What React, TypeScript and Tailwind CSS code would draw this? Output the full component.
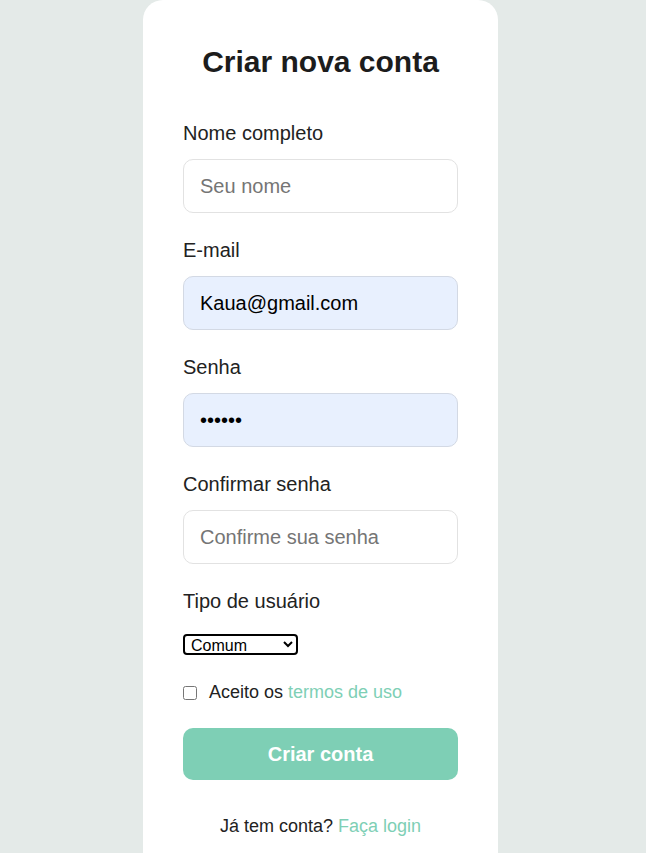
import { useState } from 'react';

const inputBase =
  'block w-full h-[54px] rounded-[10px] border px-4 text-[20px] text-black outline-none placeholder:text-[#757575]';

export default function App() {
  const [tipo, setTipo] = useState('comum');

  return (
    <div className="min-h-screen bg-[#e4eae8] font-['Liberation_Sans',Arial,sans-serif] flex justify-center pr-[5px]">
      <div className="w-[355px] bg-white rounded-[20px] px-10 pt-[44px] pb-[40px]">
        {/* Title */}
        <h1 className="text-center text-[30px] leading-[36px] font-bold text-[#1c1c1c] mb-[42px]">
          Criar nova conta
        </h1>

        {/* Fields */}
        <div className="mb-[26px]">
          <label className="block text-[20px] leading-[23px] text-[#222] mb-[14px]">Nome completo</label>
          <input className={`${inputBase} border-[#e2e2e2] bg-white`} placeholder="Seu nome" />
        </div>

        <div className="mb-[26px]">
          <label className="block text-[20px] leading-[23px] text-[#222] mb-[14px]">E-mail</label>
          <input className={`${inputBase} border-[#d3d9e4] bg-[#e8f0fe]`} defaultValue="Kaua@gmail.com" />
        </div>

        <div className="mb-[26px]">
          <label className="block text-[20px] leading-[23px] text-[#222] mb-[14px]">Senha</label>
          <input
            type="password"
            className={`${inputBase} border-[#d3d9e4] bg-[#e8f0fe]`}
            defaultValue="123456"
          />
        </div>

        <div className="mb-[26px]">
          <label className="block text-[20px] leading-[23px] text-[#222] mb-[14px]">Confirmar senha</label>
          <input type="password" className={`${inputBase} border-[#e2e2e2] bg-white`} placeholder="Confirme sua senha" />
        </div>

        <div>
          <label className="block text-[20px] leading-[23px] text-[#222] mb-[21px]">Tipo de usuário</label>
          <select
            value={tipo}
            onChange={(e) => setTipo(e.target.value)}
            className="block w-[115px] h-[21px] border-2 border-black rounded-[4px] text-[16px] leading-[17px] text-black bg-white pl-[2px]"
          >
            <option value="comum">Comum</option>
            <option value="admin">Administrador</option>
          </select>
        </div>

        {/* Terms */}
        <div className="flex items-center mt-[27px] h-[21px]">
          <input type="checkbox" className="w-[14px] h-[14px] m-0" />
          <span className="ml-[12px] text-[18px] leading-[21px] text-[#222]">
            Aceito os <a className="text-[#7ecfb5]">termos de uso</a>
          </span>
        </div>

        <button className="mt-[25px] block w-full h-[52px] rounded-[10px] bg-[#7ecfb5] text-white text-[20px] font-bold">
          Criar conta
        </button>

        <p className="mt-[36px] text-center text-[18px] leading-[21px] text-[#222]">
          Já tem conta? <a className="text-[#7ecfb5]">Faça login</a>
        </p>
      </div>
    </div>
  );
}
